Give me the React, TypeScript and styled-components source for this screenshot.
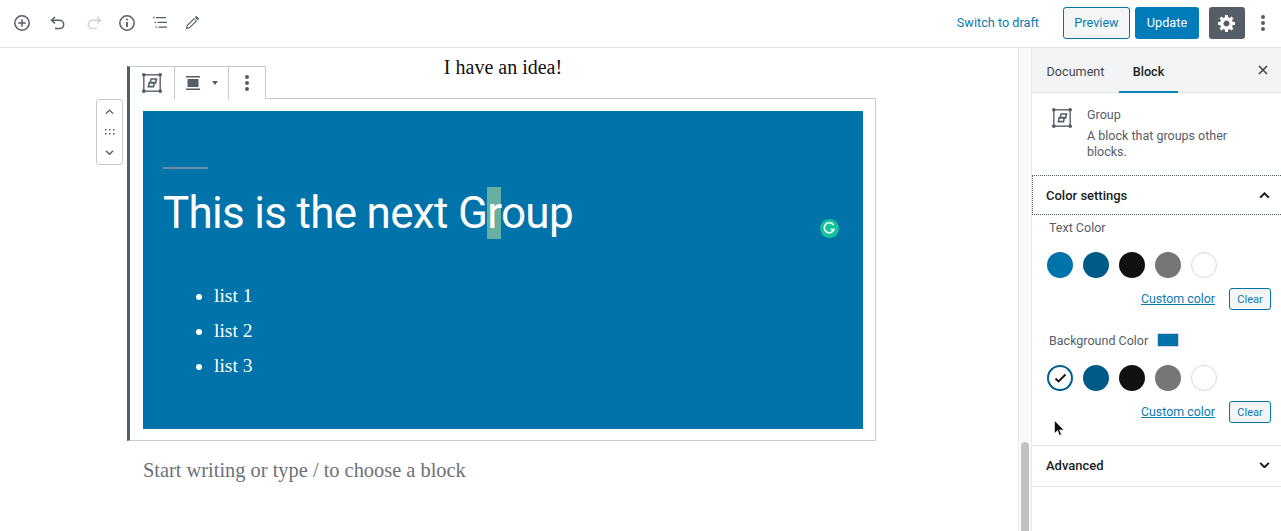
import React from "react";
import styled, { createGlobalStyle } from "styled-components";

const Global = createGlobalStyle`
  html, body { margin: 0; padding: 0; background: #fff; overflow: hidden; }
  * { box-sizing: border-box; }
  body { font-family: Roboto, "Liberation Sans", sans-serif; color: #191e23; }
`;

const Page = styled.div`
  width: 1281px; height: 531px; display: flex; flex-direction: column; overflow: hidden; position: relative;
`;
const TopBar = styled.header`
  height: 48px; flex: none; display: flex; align-items: center; border-bottom: 1px solid #e2e4e7;
  padding: 0 0 2px 14px; background: #fff;
`;
const ToolIcon = styled.span<{ $w: number; $faded?: boolean }>`
  width: ${p => p.$w}px; display: flex; align-items: center; justify-content: flex-start;
  color: ${p => (p.$faded ? "#cfd2d6" : "#555d66")};
`;
const Spacer = styled.div`flex: 1;`;
const DraftLink = styled.span`font-size: 12.7px; color: #0a7ab0; margin-right: 24px;`;
const PreviewButton = styled.span`
  width: 67px; height: 32px; border: 1px solid #0073aa; border-radius: 3px; background: #f3f5f6; color: #0a7ab0;
  font-size: 12.7px; display: flex; align-items: center; justify-content: center; margin-right: 5px;
`;
const UpdateButton = styled.span`
  width: 64px; height: 32px; border-radius: 3px; background: #007cba; color: #fff; font-size: 12.7px;
  display: flex; align-items: center; justify-content: center; margin-right: 10px;
`;
const GearButton = styled.span`
  width: 36px; height: 32px; border-radius: 3px; background: #555d66; color: #fff;
  display: flex; align-items: center; justify-content: center;
`;
const MoreButton = styled.span`width: 36px; display: flex; justify-content: center; color: #555d66;`;

const Body = styled.div`flex: 1; display: flex; min-height: 0;`;
const Canvas = styled.main`width: 1018px; flex: none; position: relative; overflow: hidden;`;
const IdeaTitle = styled.p`
  margin: 6px 0 0 143px; width: 720px; height: 44px; text-align: center; font-family: "Liberation Serif", serif;
  font-size: 20px; line-height: 27px; color: #111;
`;
const BlockFrame = styled.section`
  margin-left: 127px; width: 749px; height: 343px; border: 1px solid #c5c9ce; border-left: 3px solid #555d66;
  padding: 12px 12px 11px 13px; position: relative;
`;
const BlockToolbar = styled.div`
  position: absolute; left: -3px; top: -33px; height: 33px; display: flex; background: #fff;
  border: 1px solid #c5c9ce; border-bottom: 0; border-left: 3px solid #555d66; color: #555d66;
`;
const ToolbarCell = styled.span<{ $w: number; $last?: boolean }>`
  width: ${p => p.$w}px; display: flex; align-items: center; justify-content: center; gap: 12px;
  border-right: ${p => (p.$last ? "0" : "1px solid #c5c9ce")};
`;
const Caret = styled.i`
  width: 0; height: 0; border-left: 3px solid transparent; border-right: 3px solid transparent;
  border-top: 4px solid #555d66;
`;
const Mover = styled.div`
  position: absolute; left: -34px; top: 0; width: 27px; height: 66px; border: 1px solid #c5c9ce; border-radius: 3px;
  background: #fff; display: flex; flex-direction: column; align-items: center; justify-content: space-between;
  padding: 9px 0; color: #555d66;
`;
const GroupBlock = styled.div`
  background: #0073aa; height: 318px; padding: 56px 20px 0; color: #fff; position: relative;
`;
const Separator = styled.hr`
  width: 45px; height: 2px; margin: 0; border: 0; background: #6d8da1;
`;
const Heading = styled.h2`
  margin: 12px 0 0; font-weight: 400; font-family: Roboto, sans-serif; font-size: 44px; line-height: 64px;
  letter-spacing: -.7px; white-space: nowrap;
`;
const Selected = styled.span`background: rgba(150, 200, 160, .7);`;
const ListBlock = styled.ul`
  margin: 33px 0 0; padding: 0 0 0 51px; list-style: disc; font-family: "Liberation Serif", serif; font-size: 19.5px;
  line-height: 35px;
`;
const GrammarlyBadge = styled.span`
  position: absolute; left: 677px; top: 108px; width: 19px; height: 19px; border-radius: 50%; background: #15c39a;
  display: flex; align-items: center; justify-content: center;
`;
const Placeholder = styled.p`
  margin: 16px 0 0 143px; font-family: "Liberation Serif", serif; font-size: 20.4px; line-height: 27px; color: #6c7176;
`;

const ScrollTrack = styled.div`
  width: 14px; flex: none; background: #fafafa; border-left: 1px solid #e8e8e8; border-right: 1px solid #e8e8e8;
  padding: 394px 2px 0;
`;
const ScrollThumb = styled.div`height: 100%; background: #c1c1c1; border-radius: 4px 4px 0 0;`;

const Sidebar = styled.aside`width: 249px; flex: none; background: #fff; display: flex; flex-direction: column; font-size: 12.5px;`;
const TabsRow = styled.div`
  height: 45px; flex: none; background: #f3f4f5; border-bottom: 1px solid #e2e4e7; display: flex; align-items: stretch;
  padding-left: 15px; position: relative;
`;
const Tab = styled.span<{ $active?: boolean; $w: number }>`
  width: ${p => p.$w}px; display: flex; align-items: center; justify-content: center; font-size: 12.6px;
  font-weight: ${p => (p.$active ? 500 : 400)}; color: ${p => (p.$active ? "#191e23" : "#40464d")};
  height: 45px; padding-top: ${p => (p.$active ? "3px" : "1px")};
  border-bottom: ${p => (p.$active ? "2px solid #0085ba" : "0")};
  margin-left: ${p => (p.$active ? "15px" : "0")};
`;
const CloseIcon = styled.span`position: absolute; right: 11px; top: 15px; display: flex; color: #40464d;`;
const BlockCard = styled.div`height: 82px; flex: none; display: flex; padding: 15px 16px 0 20px; gap: 15px; color: #555d66;`;
const CardIcon = styled.span`flex: none; width: 20px; display: flex; height: 20px;`;
const CardText = styled.div`display: flex; flex-direction: column; margin-top: -1px; font-size: 12.5px; line-height: 16px; color: #555d66;`;
const CardTitle = styled.span`margin-bottom: 5px; line-height: 16px;`;
const CardDesc = styled.span`width: 160px;`;
const PanelHeader = styled.div<{ $focus?: boolean }>`
  height: 40px; flex: none; display: flex; align-items: center; justify-content: space-between;
  padding: 0 11px ${p => (p.$focus ? 0 : 2)}px ${p => (p.$focus ? 13 : 14)}px; font-weight: 500; font-size: 13px; color: #191e23;
  border: ${p => (p.$focus ? "1px dotted #555d66" : "0")}; border-right: 0;
`;
const ColorPanel = styled.div`flex: none; height: 231px; padding: 4px 10px 0 17px; border-bottom: 1px solid #e2e4e7;`;
const ColorLabelRow = styled.div<{ $mt?: number }>`
  height: 18px; padding-bottom: 2px; margin-top: ${p => p.$mt ?? 0}px; display: flex; align-items: center; gap: 9px; font-size: 12.5px; color: #555d66;
`;
const Swatch = styled.span`width: 22px; height: 14px; background: #0073aa; border: 1px solid #d5dade; margin-top: -1px;`;
const Circles = styled.div`display: flex; gap: 10px; margin: 15px 0 0 -2px;`;
const Circle = styled.span<{ $c: string; $ring?: boolean }>`
  width: 26px; height: 26px; border-radius: 50%; background: ${p => p.$c};
  border: ${p => (p.$ring ? "2px solid #00608f" : p.$c === "#fff" ? "1px solid #d8d8d8" : "0")};
  display: flex; align-items: center; justify-content: center;
`;
const ColorActions = styled.div`display: flex; justify-content: flex-end; align-items: center; gap: 14px; margin-top: 10px;`;
const CustomLink = styled.a`color: #0a7ab0; text-decoration: underline; font-size: 12.4px; margin-top: -2px;`;
const ClearButton = styled.span`
  width: 42px; height: 22px; border: 1px solid #0073aa; border-radius: 3px; background: #f3f5f6; color: #0a7ab0;
  font-size: 11px; display: flex; align-items: center; justify-content: center;
`;
const PanelDivider = styled.div`border-bottom: 1px solid #e2e4e7;`;
const CursorMark = styled.span`position: absolute; left: 1054px; top: 420px; display: flex;`;

const Inserter = () => (
  <svg width="16" height="16" viewBox="0 0 16 16" fill="none" stroke="currentColor" strokeWidth="1.500">
    <circle cx="8" cy="8" r="7.200" /><path d="M8 4.200v7.600M4.200 8h7.600" />
  </svg>
);
const Undo = () => <svg width="15" height="14" viewBox="0 0 15 14" fill="none" stroke="currentColor" strokeWidth="1.500"><path d="M5 1L1.500 4.200 5 7.400" /><path d="M2 4.200h7.500a4.200 4.200 0 0 1 0 8.400H5" /></svg>;
const Redo = () => <svg width="15" height="14" viewBox="0 0 15 14" fill="none" stroke="currentColor" strokeWidth="1.500"><path d="M10 1l3.500 3.200L10 7.400" /><path d="M13 4.200H5.500a4.200 4.200 0 0 0 0 8.400H10" /></svg>;
const Info = () => (
  <svg width="16" height="16" viewBox="0 0 16 16" fill="none" stroke="currentColor" strokeWidth="1.500">
    <circle cx="8" cy="8" r="7.200" /><path d="M8 7v5" strokeWidth="1.800" /><circle cx="8" cy="4.600" r="1" fill="currentColor" stroke="none" />
  </svg>
);
const ListView = () => <svg width="14" height="11" viewBox="0 0 14 11" fill="currentColor"><path d="M0 0h1.500v1.200H0zM3 0H13v1.200H3zM1.500 4.800H3V6H1.500zM4.500 4.800H14V6H4.500zM2.500 9.600H4v1.200H2.500zM5.500 9.600H14v1.200H5.500z" /></svg>;
const Pencil = () => <svg width="15" height="15" viewBox="0 0 16 16" fill="currentColor"><path fillRule="evenodd" d="M12 .8l3.200 3.200-1.500 1.500-3.200-3.200zM9.700 3.100l3.200 3.200-7.900 7.900L.8 15.200l1-4.200zM3 11.500l-.6 2.100 2.100-.6 7-7-1.500-1.500z" /></svg>;
const Gear = () => <svg width="20" height="20" viewBox="0 0 20 20" fill="currentColor"><path d="M18 12h-2.180c-.17.7-.44 1.350-.81 1.930l1.540 1.540-2.100 2.100-1.540-1.540c-.58.36-1.230.63-1.910.79V19H8v-2.180c-.68-.16-1.330-.43-1.910-.79l-1.540 1.540-2.120-2.120 1.540-1.540c-.36-.58-.63-1.230-.79-1.910H1V9.030h2.170c.16-.7.44-1.350.8-1.940L2.430 5.550l2.100-2.100 1.540 1.540c.58-.37 1.240-.64 1.930-.81V2h3v2.180c.68.16 1.330.43 1.910.79l1.540-1.540 2.120 2.120-1.540 1.540c.36.59.64 1.240.8 1.940H18V12zm-8.500 1.500c1.660 0 3-1.340 3-3s-1.340-3-3-3-3 1.340-3 3 1.340 3 3 3z" /></svg>;
const Dots = () => <svg width="4" height="16" viewBox="0 0 4 16" fill="currentColor"><circle cx="2" cy="2" r="2" /><circle cx="2" cy="8" r="2" /><circle cx="2" cy="14" r="2" /></svg>;
const GroupIcon = ({ s }: { s: number }) => (
  <svg width={s} height={s} viewBox="0 0 22 22" fill="none" stroke="#555d66">
    <rect x="2" y="2" width="18" height="18" strokeWidth="1.500" />
    <g fill="#555d66" stroke="none">
      <circle cx="2" cy="2" r="2" /><circle cx="20" cy="2" r="2" /><circle cx="2" cy="20" r="2" /><circle cx="20" cy="20" r="2" />
    </g>
    <path d="M10 6.500h6l-1 4.500h-6zM8 10.500h5.500l-.8 4.500H7z" strokeWidth="1.700" />
  </svg>
);
const AlignIcon = () => <svg width="14" height="14" viewBox="0 0 14 14" fill="#555d66"><path d="M0 0h14v1.500H0zM0 12.500h14V14H0zM1.500 3h11v8h-11z" /></svg>;
const Chevron = ({ up, c = "#555d66", w = 9, sw = 1.500 }: { up?: boolean; c?: string; w?: number; sw?: number }) => (
  <svg width={w} height={w * .6} viewBox="0 0 10 6" fill="none" stroke={c} strokeWidth={sw}>
    <path d={up ? "M1 5.200l4-4 4 4" : "M1 .8l4 4 4-4"} />
  </svg>
);
const Grip = () => <svg width="10" height="6" viewBox="0 0 10 6" fill="#555d66">{[0, 4, 8].flatMap(x => [0, 4].map(y => <rect key={`${x}${y}`} x={x} y={y} width="1.500" height="1.500" />))}</svg>;

const Palette = ({ selected }: { selected?: boolean }) => (
  <Circles>
    <Circle $c={selected ? "#fff" : "#0073aa"} $ring={selected}>
      {selected && <svg width="13" height="10" viewBox="0 0 13 10" fill="none" stroke="#111" strokeWidth="1.800"><path d="M1.500 5.500l3 3 7-7" /></svg>}
    </Circle>
    <Circle $c="#005a87" /><Circle $c="#111111" /><Circle $c="#767676" /><Circle $c="#fff" />
  </Circles>
);

export default function App() {
  return (
    <Page>
      <Global />
      <TopBar>
        <ToolIcon $w={36}><Inserter /></ToolIcon>
        <ToolIcon $w={37}><Undo /></ToolIcon>
        <ToolIcon $w={32} $faded><Redo /></ToolIcon>
        <ToolIcon $w={34}><Info /></ToolIcon>
        <ToolIcon $w={32}><ListView /></ToolIcon>
        <ToolIcon $w={30}><Pencil /></ToolIcon>
        <Spacer />
        <DraftLink>Switch to draft</DraftLink>
        <PreviewButton>Preview</PreviewButton>
        <UpdateButton>Update</UpdateButton>
        <GearButton><Gear /></GearButton>
        <MoreButton><Dots /></MoreButton>
      </TopBar>
      <Body>
        <Canvas>
          <IdeaTitle>I have an idea!</IdeaTitle>
          <BlockFrame>
            <BlockToolbar>
              <ToolbarCell $w={45}><GroupIcon s={20} /></ToolbarCell>
              <ToolbarCell $w={54}><AlignIcon /><Caret /></ToolbarCell>
              <ToolbarCell $w={36} $last><Dots /></ToolbarCell>
            </BlockToolbar>
            <Mover>
              <Chevron up /><Grip /><Chevron />
            </Mover>
            <GroupBlock>
              <Separator />
              <Heading>This is the next G<Selected>r</Selected>oup</Heading>
              <ListBlock>
                <li>list 1</li>
                <li>list 2</li>
                <li>list 3</li>
              </ListBlock>
              <GrammarlyBadge>
                <svg width="13" height="13" viewBox="0 0 13 13" fill="none" stroke="#fff" strokeWidth="1.600"><path d="M10.500 3A5 5 0 1 0 11 7.500H7.500" /></svg>
              </GrammarlyBadge>
            </GroupBlock>
          </BlockFrame>
          <Placeholder>Start writing or type / to choose a block</Placeholder>
        </Canvas>
        <ScrollTrack><ScrollThumb /></ScrollTrack>
        <Sidebar>
          <TabsRow>
            <Tab $w={57}>Document</Tab>
            <Tab $w={59} $active>Block</Tab>
            <CloseIcon>
              <svg width="14" height="14" viewBox="0 0 14 14" fill="none" stroke="currentColor" strokeWidth="1.600"><path d="M3 3l8 8M11 3l-8 8" /></svg>
            </CloseIcon>
          </TabsRow>
          <BlockCard>
            <CardIcon><GroupIcon s={20} /></CardIcon>
            <CardText>
              <CardTitle>Group</CardTitle>
              <CardDesc>A block that groups other blocks.</CardDesc>
            </CardText>
          </BlockCard>
          <PanelHeader $focus>
            Color settings
            <Chevron up c="#191e23" w={11} sw={1.800} />
          </PanelHeader>
          <ColorPanel>
            <ColorLabelRow>Text Color</ColorLabelRow>
            <Palette />
            <ColorActions>
              <CustomLink>Custom color</CustomLink>
              <ClearButton>Clear</ClearButton>
            </ColorActions>
            <ColorLabelRow $mt={22}>Background Color<Swatch /></ColorLabelRow>
            <Palette selected />
            <ColorActions>
              <CustomLink>Custom color</CustomLink>
              <ClearButton>Clear</ClearButton>
            </ColorActions>
          </ColorPanel>
          <PanelHeader>
            Advanced
            <Chevron c="#191e23" w={11} sw={1.800} />
          </PanelHeader>
          <PanelDivider />
        </Sidebar>
      </Body>
      <CursorMark>
        <svg width="11" height="18" viewBox="0 0 11 18"><path d="M.5.500v13l3-3 2 5 2-1-2-4.500h4.500z" fill="#111" stroke="#fff" strokeWidth=".6" /></svg>
      </CursorMark>
    </Page>
  );
}
